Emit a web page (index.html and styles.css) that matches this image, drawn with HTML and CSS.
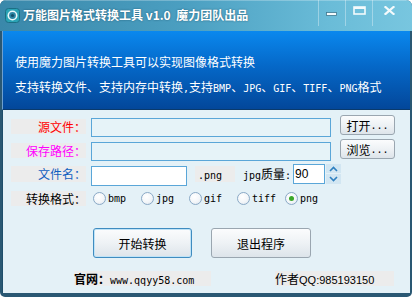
FILE: index.html
```html
<!DOCTYPE html>
<html lang="zh-CN">
<head>
<meta charset="utf-8">
<title>万能图片格式转换工具</title>
<link rel="stylesheet" href="styles.css">
</head>
<body>
<div class="window">
  <div class="titlebar">
    <svg class="appicon" width="15" height="15" viewBox="0 0 15 15">
      <rect x="0.5" y="0.5" width="14" height="14" rx="3" fill="#2aa3b5" stroke="#1c6f84"/>
      <circle cx="7.5" cy="7.5" r="5" fill="#e9f7fa"/>
      <circle cx="7.5" cy="7.5" r="3.4" fill="#2c86a6"/>
      <circle cx="7.5" cy="7.5" r="1.6" fill="#154e68"/>
    </svg>
    <span class="title">万能图片格式转换工具 v1.0&nbsp; 魔力团队出品</span>
    <div class="controls">
      <div class="ctl">
        <svg width="12" height="4" viewBox="0 0 12 4"><rect x="0.5" y="0.5" width="10" height="3" fill="#f4fafc" stroke="#3f7890" stroke-width="0.8"/></svg>
      </div>
      <div class="ctl">
        <svg width="13" height="9" viewBox="0 0 13 9"><rect x="1" y="1" width="11" height="7" fill="none" stroke="#f4fafc" stroke-width="1.6"/><rect x="1" y="1" width="11" height="2" fill="#f4fafc"/></svg>
      </div>
      <div class="ctl close">
        <svg width="11" height="9" viewBox="0 0 11 9"><path d="M1.5 1 L9.5 8 M9.5 1 L1.5 8" stroke="#f4fafc" stroke-width="2.2" stroke-linecap="square"/></svg>
      </div>
    </div>
  </div>
  <div class="client">
    <div class="banner">
      <p>使用魔力图片转换工具可以实现图像格式转换</p>
      <p>支持转换文件、支持内存中转换<span class="m">,</span>支持<span class="m">BMP</span>、<span class="m">JPG</span>、<span class="m">GIF</span>、<span class="m">TIFF</span>、<span class="m">PNG</span>格式</p>
    </div>
    <div class="body">
      <div class="row">
        <div class="label red">源文件：</div>
        <div class="input long"></div>
        <div class="btn small">打开<span class="m">...</span></div>
      </div>
      <div class="row">
        <div class="label magenta">保存路径：</div>
        <div class="input long"></div>
        <div class="btn small">浏览<span class="m">...</span></div>
      </div>
      <div class="row row3">
        <div class="label blue">文件名：</div>
        <div class="input name"></div>
        <div class="ext"><span class="m">.png</span></div>
        <div class="quality"><span class="m">jpg</span>质量<span class="m">:</span></div>
        <div class="spin"><span class="val">90</span></div>
        <div class="arrows">
          <div class="arr"><svg width="9" height="6" viewBox="0 0 9 6"><path d="M1 5 L4.5 1.5 L8 5" fill="none" stroke="#2f80c0" stroke-width="1.6"/></svg></div>
          <div class="arr"><svg width="9" height="6" viewBox="0 0 9 6"><path d="M1 1 L4.5 4.5 L8 1" fill="none" stroke="#2f80c0" stroke-width="1.6"/></svg></div>
        </div>
      </div>
      <div class="row row4">
        <div class="label">转换格式：</div>
        <div class="radios">
          <div class="radio"><span class="dot"></span><span class="m">bmp</span></div>
          <div class="radio"><span class="dot"></span><span class="m">jpg</span></div>
          <div class="radio"><span class="dot"></span><span class="m">gif</span></div>
          <div class="radio"><span class="dot"></span><span class="m">tiff</span></div>
          <div class="radio checked"><span class="dot"></span><span class="m">png</span></div>
        </div>
      </div>
      <div class="actions">
        <div class="btn big primary">开始转换</div>
        <div class="btn big">退出程序</div>
      </div>
      <div class="footer">
        <div class="fbox site"><span class="bold">官网：</span><span class="m">www.qqyy58.com</span></div>
        <div class="fbox author">作者<span class="s">QQ:985193150</span></div>
      </div>
    </div>
  </div>
</div>
</body>
</html>
```
FILE: styles.css
```css
html, body {
  margin: 0;
  padding: 0;
  background: #ffffff;
}
body {
  font-family: "Noto Sans CJK SC", "Noto Sans", sans-serif;
  font-size: 12px;
  color: #000;
}
.m {
  font-family: "DejaVu Sans Mono", "Liberation Mono", monospace;
  font-size: 10px;
}
.s {
  font-family: "Liberation Sans", "Noto Sans", sans-serif;
  font-size: 11px;
}
.window {
  width: 412px;
  height: 297px;
  box-sizing: border-box;
  display: flex;
  flex-direction: column;
  background: #2a5873;
  border-radius: 6px 6px 5px 5px;
  overflow: hidden;
  padding: 0 2px 4px 2px;
}
.titlebar {
  height: 31px;
  margin: 0 -2px;
  flex: none;
  display: flex;
  align-items: flex-start;
  background: linear-gradient(90deg, #3a88aa 0%, #4b9fc1 45%, #6abcd8 80%, #78c6df 100%);
  box-shadow: inset 0 1px 0 rgba(255,255,255,0.25);
}
.appicon {
  margin: 8px 0 0 5px;
  flex: none;
}
.title {
  margin: 6px 0 0 3px;
  color: #fff;
  font-weight: bold;
  font-size: 12px;
  line-height: 18px;
  text-shadow: 0 0 2px rgba(10,50,70,0.6);
  white-space: nowrap;
}
.controls {
  margin-left: auto;
  margin-right: 7px;
  display: flex;
  height: 26px;
}
.ctl {
  width: 27px;
  height: 26px;
  border-left: 1px solid rgba(255,255,255,0.35);
  display: flex;
  align-items: flex-start;
  justify-content: center;
  box-sizing: border-box;
}
.ctl:first-child svg { margin-top: 12px; }
.ctl:nth-child(2) svg { margin-top: 6px; }
.ctl.close { width: 33px; }
.ctl.close svg { margin-top: 6px; }
.client {
  flex: 1;
  display: flex;
  flex-direction: column;
  background: #e4f1f7;
}
.banner {
  height: 79px;
  flex: none;
  box-sizing: border-box;
  padding: 18px 0 0 12px;
  background: linear-gradient(180deg, #0a88ee 0%, #0568c8 45%, #03479a 100%);
  border-bottom: 1px solid #0a3a6c;
  border-left: 1px solid #6d9fcf;
  color: #fff;
}
.banner p {
  margin: 0;
  line-height: 25px;
  white-space: nowrap;
}
.body {
  flex: 1;
  padding: 6px 0 0 8px;
  border-left: 1px solid #1f4e6a;
  display: flex;
  flex-direction: column;
}
.row {
  display: flex;
  align-items: flex-start;
  height: 20px;
  margin-bottom: 4px;
}
.label {
  width: 75px;
  height: 15px;
  line-height: 15px;
  margin-top: 3px;
  background: #ececec;
  text-align: right;
  white-space: nowrap;
  flex: none;
}
.red { color: #ff0000; }
.magenta { color: #ff00ff; }
.blue { color: #1060c0; }
.input {
  box-sizing: border-box;
  height: 19px;
  margin-top: 2px;
  border: 1px solid #5aa6d8;
  background: #e6f3f8;
  flex: none;
}
.input.long {
  width: 240px;
  margin-left: 5px;
}
.btn {
  box-sizing: border-box;
  display: flex;
  align-items: center;
  justify-content: center;
  background: linear-gradient(180deg, #fbfcfd 0%, #eef2f5 50%, #dde4ea 100%);
  border: 1px solid #9aa6b0;
  border-radius: 3px;
  white-space: nowrap;
  flex: none;
}
.btn.small {
  width: 55px;
  height: 20px;
  margin-left: 9px;
  margin-top: -1px;
}
.row3 {
  height: 21px;
  margin-bottom: 6px;
}
.row3 .label {
  margin-top: 2px;
  height: 16px;
  line-height: 16px;
}
.input.name {
  width: 96px;
  height: 20px;
  margin-left: 5px;
  background: #ffffff;
}
.ext {
  width: 40px;
  height: 16px;
  line-height: 16px;
  margin: 2px 0 0 8px;
  background: #ececec;
  padding-left: 3px;
  box-sizing: border-box;
}
.quality {
  margin: 2px 0 0 8px;
  line-height: 16px;
  white-space: nowrap;
}
.spin {
  box-sizing: border-box;
  width: 32px;
  height: 20px;
  margin-left: 2px;
  border: 1px solid #5aa6d8;
  background: #fff;
  padding-left: 1px;
  line-height: 18px;
  font-family: "Liberation Sans", "DejaVu Sans", sans-serif;
  font-size: 12px;
}
.arrows {
  margin-left: 1px;
  display: flex;
  flex-direction: column;
  width: 15px;
}
.arr {
  height: 10px;
  background: #d2e6f2;
  display: flex;
  align-items: center;
  justify-content: center;
}
.arr:first-child { border-bottom: 1px solid #e4f1f7; height: 9px; }
.row4 {
  height: 16px;
  margin-bottom: 21px;
}
.row4 .label {
  margin-top: 0;
}
.radios {
  display: flex;
  margin-left: 7px;
}
.radio {
  width: 48px;
  display: flex;
  align-items: center;
  height: 15px;
}
.radio .m { margin-left: 2px; line-height: 15px; }
.dot {
  box-sizing: border-box;
  width: 13px;
  height: 13px;
  border-radius: 50%;
  border: 1px solid #8aa9c6;
  background: radial-gradient(circle at 40% 35%, #ffffff 0%, #f3f6f9 55%, #d7e1ea 100%);
  display: flex;
  align-items: center;
  justify-content: center;
  flex: none;
}
.radio.checked .dot::after {
  content: "";
  width: 5px;
  height: 5px;
  border-radius: 50%;
  background: #3aa82a;
}
.actions {
  display: flex;
  height: 30px;
  margin-left: 82px;
}
.btn.big {
  width: 100px;
  height: 30px;
  font-size: 12px;
}
.btn.big.primary {
  width: 99px;
  border-color: #3f8cc0;
  box-shadow: inset 0 0 0 1px #bfe3f7;
  margin-right: 19px;
}
.footer {
  display: flex;
  margin-top: 13px;
  height: 15px;
}
.fbox {
  height: 15px;
  line-height: 15px;
  background: #ececec;
  white-space: nowrap;
}
.site {
  width: 137px;
  margin-left: 63px;
}
.bold { font-weight: bold; }
.author {
  width: 119px;
  margin-left: 64px;
}
```
